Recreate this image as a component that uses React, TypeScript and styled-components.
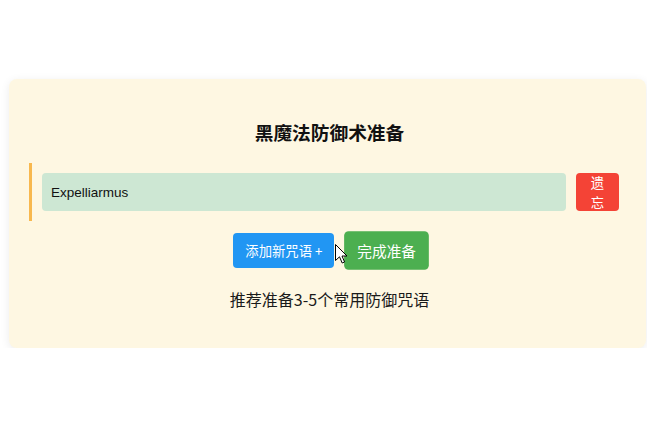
import React from "react";
import styled, { createGlobalStyle } from "styled-components";

const GlobalStyle = createGlobalStyle`
  html, body {
    margin: 0;
    padding: 0;
    background: #ffffff;
    font-family: "Liberation Sans", "Noto Sans CJK SC", sans-serif;
  }
`;

const Page = styled.div`
  padding: 79px 0 0 9px;
`;

const Card = styled.div`
  width: 637px;
  box-sizing: border-box;
  background: #fef7e2;
  border-radius: 8px;
  box-shadow: 0 2px 10px rgba(0, 0, 0, 0.08);
  padding: 44px 16px 38px 20px;
`;

const Title = styled.h3`
  margin: 0 0 18px;
  text-align: center;
  font-size: 18.7px;
  line-height: 22px;
  font-weight: bold;
  color: #111;
`;

const SpellRow = styled.div`
  display: flex;
  align-items: center;
  gap: 10px;
  margin-right: 11px;
  border-left: 3px solid #f8b84e;
  padding: 10px 0 10px 10px;
`;

const SpellInput = styled.input`
  flex: 1;
  height: 38px;
  box-sizing: border-box;
  border: none;
  border-radius: 4px;
  background: #cde7d3;
  padding: 0 9px;
  font-family: "Liberation Sans", Arial, sans-serif;
  font-size: 13.5px;
  color: #111;
  outline: none;
`;

const ForgetButton = styled.button`
  width: 43px;
  height: 38px;
  box-sizing: border-box;
  padding: 0 14px;
  border: none;
  border-radius: 4px;
  background: #f44336;
  color: #fff;
  font-family: "Noto Sans CJK SC", sans-serif;
  font-size: 13.33px;
  line-height: 20px;
  word-break: break-all;
`;

const Actions = styled.div`
  position: relative;
  display: flex;
  justify-content: center;
  gap: 14px;
  margin-top: 12px;
`;

const ActionButton = styled.button<{ $bg: string; $hover?: boolean }>`
  height: 35px;
  padding: 0 12px;
  border: none;
  border-radius: 4px;
  background: ${(p) => p.$bg};
  color: #fff;
  font-family: "Noto Sans CJK SC", "Liberation Sans", sans-serif;
  font-size: 13.33px;
  transform: ${(p) => (p.$hover ? "scale(1.1)" : "none")};
`;

const Cursor = styled.svg`
  position: absolute;
  left: 306px;
  top: 11px;
  width: 13px;
  height: 20px;
`;

const Hint = styled.p`
  margin: 20px 0 0;
  text-align: center;
  font-family: "Noto Sans CJK SC", sans-serif;
  font-size: 16px;
  line-height: 22px;
  color: #1a1a1a;
`;

export default function App() {
  return (
    <>
      <GlobalStyle />
      <Page>
        <Card>
          <Title>黑魔法防御术准备</Title>
          <SpellRow>
            <SpellInput defaultValue="Expelliarmus" />
            <ForgetButton>遗忘</ForgetButton>
          </SpellRow>
          <Actions>
            <ActionButton $bg="#2196f3">添加新咒语 +</ActionButton>
            <ActionButton $bg="#4caf50" $hover>
              完成准备
            </ActionButton>
            <Cursor viewBox="0 0 13 20">
              <path
                d="M0.5 0.5 L0.5 16.5 L4.5 12.8 L7.2 19 L9.6 18 L7 12 L12 12 Z"
                fill="#fff"
                stroke="#000"
                strokeWidth="1"
                strokeLinejoin="miter"
              />
            </Cursor>
          </Actions>
          <Hint>推荐准备3-5个常用防御咒语</Hint>
        </Card>
      </Page>
    </>
  );
}
